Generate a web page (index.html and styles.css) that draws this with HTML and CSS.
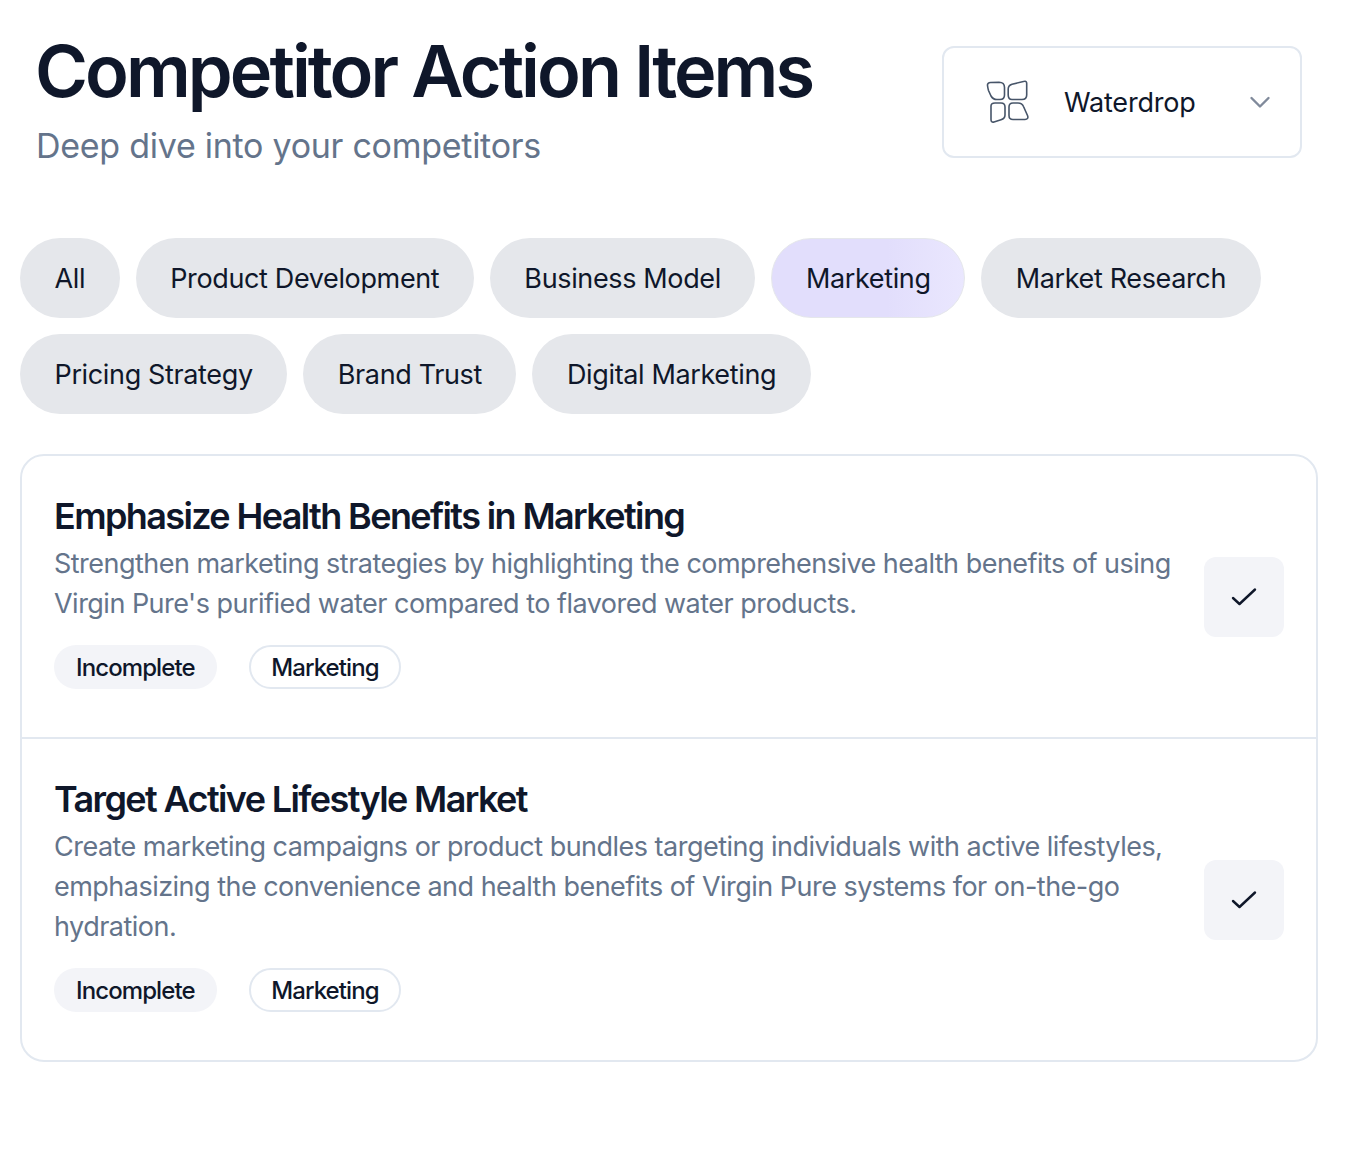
FILE: index.html
```html
<!DOCTYPE html>
<html lang="en">
<head>
  <meta charset="UTF-8">
  <title>Competitor Action Items</title>
  <link rel="stylesheet" href="styles.css">
</head>
<body>
  <header class="page-header">
    <div class="heading">
      <h1>Competitor Action Items</h1>
      <p>Deep dive into your competitors</p>
    </div>
    <button class="company-select">
      <svg class="company-logo" width="44" height="44" viewBox="0 0 44 44" fill="none" stroke="#475569" stroke-width="1.6" stroke-linejoin="round">
        <path d="M2.500 5.500C2.200 3.600 3.600 2.600 5.500 2.500L14 2.300C17.500 2.300 19.500 4 19.500 7.500V15C19.500 18 18 19.500 15 19.500H12C9 19.500 7.300 18.300 6 16L3.500 10.500C3 9 2.700 7 2.500 5.500Z"/>
        <path d="M39.500 1.300C41 0.900 41.700 2 41.700 3.500V15C41.700 18 40 19.500 37 19.500H27C24 19.500 23.200 18 23.200 15V9C23.200 6 24.500 5 27 4.200L39.500 1.300Z"/>
        <path d="M6 26C6 23.500 7.500 23 10 23H16C18.500 23 20 24.500 20 27V35C20 38 18.500 39 16 39.800L9 42C7 42.600 6 41.500 6 39.500V26Z"/>
        <path d="M24 27C24 24.500 25.500 23 28 23H33C36 23 37.500 24 38.500 26.500L42.500 35.500C43.500 38 42.500 39.500 40 39.500H28C25.500 39.500 24 38 24 35.500V27Z"/>
      </svg>
      <span class="company-name">Waterdrop</span>
      <svg class="chevron" width="24" height="24" viewBox="0 0 24 24" fill="none" stroke="#808a9b" stroke-width="2.400" stroke-linecap="round" stroke-linejoin="round">
        <path d="M3.500 8 12 16.500 20.500 8"/>
      </svg>
    </button>
  </header>

  <nav class="filters">
    <a class="pill">All</a>
    <a class="pill">Product Development</a>
    <a class="pill">Business Model</a>
    <a class="pill active">Marketing</a>
    <a class="pill">Market Research</a>
    <a class="pill">Pricing Strategy</a>
    <a class="pill">Brand Trust</a>
    <a class="pill">Digital Marketing</a>
  </nav>

  <section class="items">
    <article class="item">
      <div class="item-body">
        <h2>Emphasize Health Benefits in Marketing</h2>
        <p>Strengthen marketing strategies by highlighting the comprehensive health benefits of using Virgin Pure's purified water compared to flavored water products.</p>
        <div class="tags">
          <span class="tag status">Incomplete</span>
          <span class="tag outline">Marketing</span>
        </div>
      </div>
      <button class="done-btn">
        <svg width="32" height="32" viewBox="0 0 32 32" fill="none" stroke="#0f172a" stroke-width="2.400" stroke-linecap="round" stroke-linejoin="round"><path d="M5 17l6.500 6L27 8.500"/></svg>
      </button>
    </article>

    <article class="item">
      <div class="item-body">
        <h2>Target Active Lifestyle Market</h2>
        <p>Create marketing campaigns or product bundles targeting individuals with active lifestyles, emphasizing the convenience and health benefits of Virgin Pure systems for on-the-go hydration.</p>
        <div class="tags">
          <span class="tag status">Incomplete</span>
          <span class="tag outline">Marketing</span>
        </div>
      </div>
      <button class="done-btn">
        <svg width="32" height="32" viewBox="0 0 32 32" fill="none" stroke="#0f172a" stroke-width="2.400" stroke-linecap="round" stroke-linejoin="round"><path d="M5 17l6.500 6L27 8.500"/></svg>
      </button>
    </article>
  </section>
</body>
</html>
```

FILE: styles.css
```css
body {
  font-family: Inter, "Liberation Sans", sans-serif;
  background-color: white;
  color: #0f172a;
  margin: 0;
  padding: 0 30px 0 20px;
}

.page-header {
  display: flex;
  justify-content: space-between;
  align-items: flex-start;
  padding: 31px 16px 0 16px;
  height: 208px;
  box-sizing: border-box;
}

.page-header h1 {
  margin: 0 0 0 -1px;
  font-size: 72px;
  line-height: 80px;
  font-weight: 600;
  letter-spacing: -2.950px;
}

.page-header p {
  margin: 15px 0 0;
  font-size: 34px;
  line-height: 40px;
  letter-spacing: -0.27px;
  color: #64748b;
}

.company-select {
  display: flex;
  align-items: center;
  width: 360px;
  height: 112px;
  margin-top: 15px;
  padding: 0 28px 0 41px;
  background: white;
  border: 2px solid #e2e8f0;
  border-radius: 12px;
  font: inherit;
  color: inherit;
}

.company-name {
  flex: 1;
  margin-left: 35px;
  font-size: 27px;
  letter-spacing: -0.2px;
  text-align: left;
}

.filters {
  display: flex;
  flex-wrap: wrap;
  gap: 16px;
  margin-top: 30px;
}

.pill {
  display: flex;
  align-items: center;
  height: 80px;
  padding: 0 34.500px;
  box-sizing: border-box;
  background-color: #e5e7eb;
  border-radius: 40px;
  font-size: 27px;
  letter-spacing: -0.36px;
}

.pill.active {
  padding: 0 33.500px;
  background: linear-gradient(90deg, #e2defc 60%, #eae7fe);
  border: 1px solid #e5e7eb;
}

.items {
  margin-top: 40px;
  border: 2px solid #e2e8f0;
  border-radius: 24px;
}

.item {
  display: flex;
  align-items: center;
  gap: 28px;
  padding: 0 32px;
}

.item + .item {
  border-top: 2px solid #e2e8f0;
}

.item-body {
  flex: 1;
  padding: 32px 0 48px;
}

.item h2 {
  margin: 0;
  font-size: 36px;
  line-height: 56px;
  font-weight: 600;
  letter-spacing: -1.620px;
}

.item p {
  margin: 0;
  font-size: 27px;
  line-height: 40px;
  letter-spacing: -0.52px;
  color: #64748b;
}

.tags {
  display: flex;
  gap: 32px;
  margin-top: 21px;
}

.tag {
  display: flex;
  align-items: center;
  height: 44px;
  padding: 0 22px;
  box-sizing: border-box;
  border-radius: 22px;
  font-size: 24px;
  font-weight: 500;
  letter-spacing: -0.9px;
}

.status {
  background-color: #f3f4f8;
}

.outline {
  padding: 0 20.500px;
  border: 2px solid #e2e8f0;
}

.done-btn {
  display: flex;
  align-items: center;
  justify-content: center;
  flex: none;
  width: 80px;
  height: 80px;
  padding: 0;
  border: none;
  border-radius: 12px;
  background-color: #f3f4f8;
}
```
